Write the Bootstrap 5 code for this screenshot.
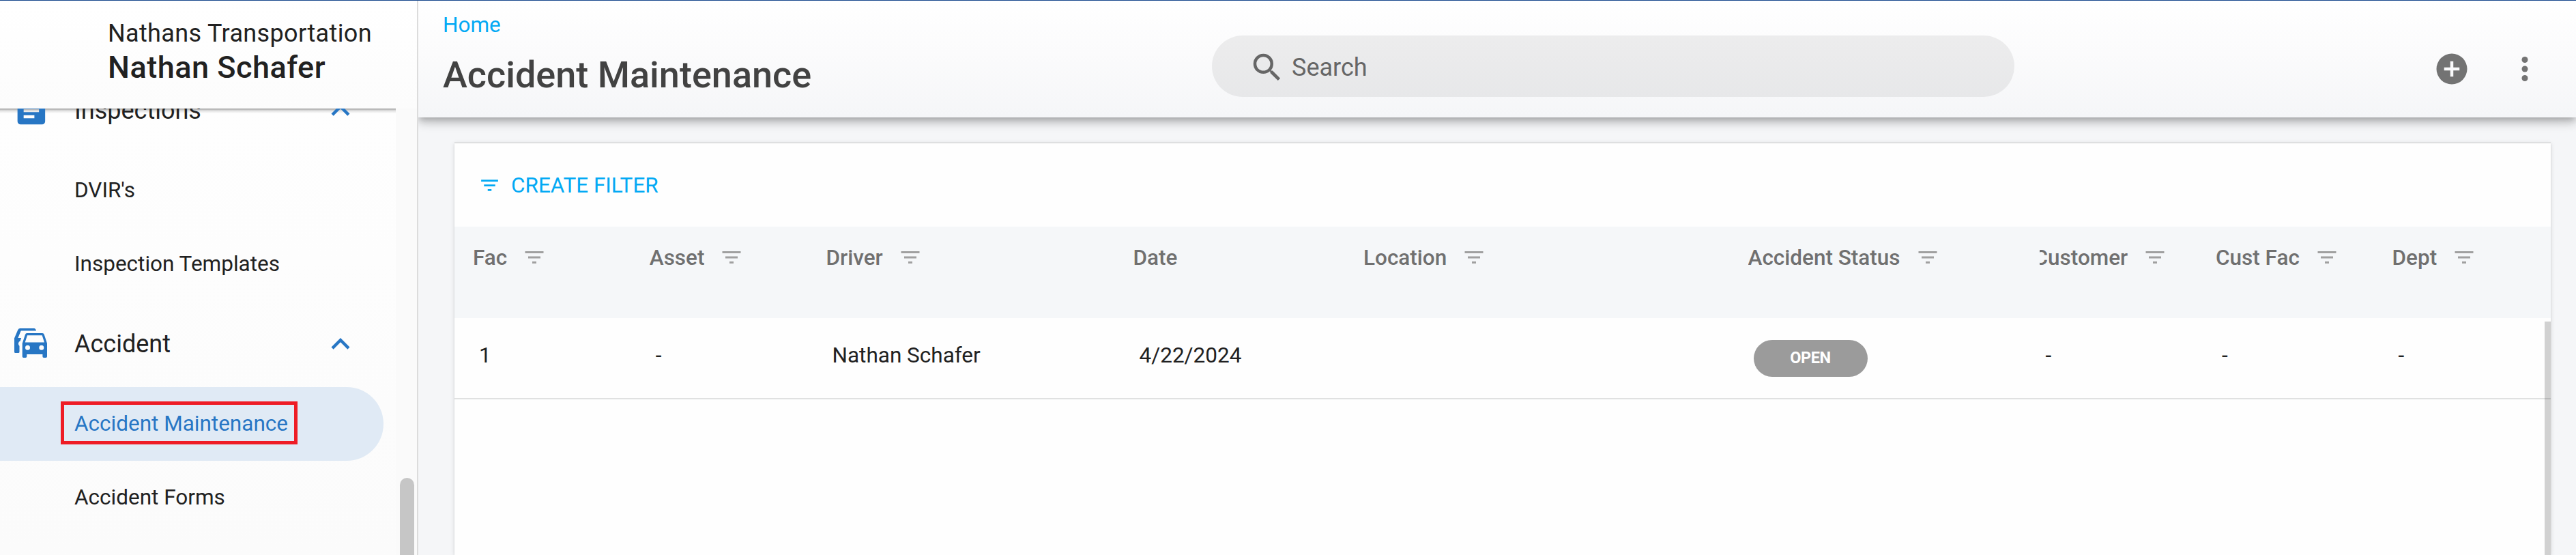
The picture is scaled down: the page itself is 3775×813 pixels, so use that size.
<!DOCTYPE html>
<html lang="en">
<head>
<meta charset="utf-8">
<title>Accident Maintenance</title>
<link href="https://cdn.jsdelivr.net/npm/bootstrap@5.3.0/dist/css/bootstrap.min.css" rel="stylesheet">
<style>
  body { font-family: Roboto, sans-serif; font-size: 31.5px; line-height: 1.2; color: #212121; background: #f5f6f8; }
  .app { height: 813px; border-top: 1px solid #17478c; }
  svg { display: block; flex: none; fill: currentColor; }

  .side { width: 613px; border-right: 2px solid #dcdcdc; background: #fafafa; }
  .side-head { height: 158px; background: linear-gradient(#fff, #fcfcfc); padding: 26px 0 0 158px; }
  .company { font-size: 36px; line-height: 44px; letter-spacing: .36px; }
  .person { font-size: 45px; line-height: 54px; font-weight: 500; letter-spacing: .5px; padding-top: 1px; }
  .side-list { width: 580px; background: linear-gradient(rgba(0,0,0,.4), rgba(0,0,0,.12) 3px, rgba(0,0,0,0) 7px), linear-gradient(#fefefe, #fbfbfb); }
  .side-scroll { margin-top: -60px; }
  .group { height: 126px; font-size: 36px; padding: 0 54px 0 18px; }
  .group .lead-icon { width: 91px; color: #2776c4; }
  .group .label { padding-top: 2px; }
  .group .chev { color: #2776c4; }
  .item { height: 108px; width: 562px; padding-left: 109px; }
  .item.on { background: #e0eaf5; color: #2776c4; border-radius: 0 54px 54px 0; padding-left: 89px; padding-bottom: 3px; }
  .boxed { border: 5px solid #ee1c25; height: 63px; width: 347px; padding: 3px 0 0 15px; }
  .side-thumb { width: 21px; height: 160px; margin: 541px 4px 0 auto; border-radius: 11px 11px 0 0; background: #c6c6c6; }

  .top { height: 171px; background: linear-gradient(#fff, #fbfbfc 45%, #f5f6f8);
    box-shadow: 0 4.5px 9px -2.25px rgba(0,0,0,.2), 0 9px 11.25px rgba(0,0,0,.14), 0 2.25px 22.5px rgba(0,0,0,.12); padding-left: 36px; }
  .titles { width: 1127px; padding-top: 17px; }
  .home { color: #03a9f4; line-height: 38px; }
  h1 { font-size: 54px; line-height: 64px; font-weight: 500; color: #424242; margin: 22px 0 0; }
  .search { width: 1176px; height: 90px; margin-top: 51px; border-radius: 45px; background: rgba(0,0,0,.063); padding: 3px 0 0 54px; font-size: 36px; color: #666; gap: 9px; }
  .search span { padding-top: 2px; }
  .tools { margin-top: 73px; margin-right: 48px; gap: 53px; color: #737373; }

  .panel { margin: 36px 37px 0 53px; background: #fefefe; border-top: 2px solid #dedfe0;
    box-shadow: 0 4.5px 2.25px -2.25px rgba(0,0,0,.2), 0 2.25px 2.25px rgba(0,0,0,.1), 0 2.25px 6.75px rgba(0,0,0,.12); }
  .filterbar { height: 122px; color: #03a9f4; padding-left: 35px; gap: 15px; }
  .filterbar span { padding-top: 2px; }
  .grid-row { display: grid; grid-template-columns: 258.75px 258.75px 450px 337.5px 563.5px 427px 258.5px 258.5px 1fr; padding-left: 27px; }
  .grid-head { height: 134px; background: #f5f7f9; font-weight: 500; color: #707070; padding-top: 26px; }
  .grid-head > div { display: flex; align-items: center; gap: 22px; height: 38px; overflow: hidden; white-space: nowrap; }
  .grid-head span { padding-top: 1px; }
  .grid-head > .clip > span { margin-left: -8px; }
  .grid-head svg { color: #a0a0a0; }
  .grid-body { height: 119px; border-bottom: 2px solid #e0e1e1; padding-top: 36px; }
  .grid-body > div { padding-left: 9px; line-height: 38px; }
  .status { width: 167px; height: 54px; margin: -4px 0 0 -1px; border-radius: 27px; background: #9b9b9b; color: #fff; font-size: 23.5px; letter-spacing: -.4px; font-weight: 700; padding-bottom: 2px; }
  .vbar { position: absolute; right: 0; top: 5px; bottom: 0; width: 9px; background: rgba(0,0,0,.176); }
</style>
</head>
<body>
<svg width="0" height="0" class="position-absolute">
  <symbol id="filter" viewBox="0 0 24 24"><path d="M10 18h4v-2h-4v2zM3 6v2h18V6H3zm3 7h12v-2H6v2z"/></symbol>
  <symbol id="up" viewBox="0 0 24 24"><path d="M12 8l-6 6 1.41 1.41L12 10.83l4.59 4.58L18 14z"/></symbol>
</svg>
<div class="app d-flex overflow-hidden">
  <aside class="side d-flex flex-column flex-shrink-0">
    <header class="side-head flex-shrink-0">
      <div class="company">Nathans Transportation</div>
      <div class="person">Nathan Schafer</div>
    </header>
    <div class="d-flex flex-grow-1 overflow-hidden">
      <nav class="side-list overflow-hidden flex-shrink-0">
        <div class="side-scroll">
          <div class="group d-flex align-items-center">
            <span class="lead-icon"><svg class="ms-0" width="54" height="54" viewBox="-.4 0 24 24"><path d="M19 3H5a2 2 0 0 0-2 2v14a2 2 0 0 0 2 2h14a2 2 0 0 0 2-2V5a2 2 0 0 0-2-2zm-5 14H7v-2h7v2zm3-4H7v-2h10v2zm0-4H7V7h10v2z"/></svg></span>
            <span class="label flex-grow-1">Inspections</span>
            <svg class="chev" width="54" height="54"><use href="#up"/></svg>
          </div>
          <div class="item d-flex align-items-center">DVIR's</div>
          <div class="item d-flex align-items-center">Inspection Templates</div>
          <div class="group d-flex align-items-center">
            <span class="lead-icon"><svg width="54" height="46" viewBox="-3 0 54 46">
              <path d="M8.500 0H29Q31.300 0 32 3.500H9.700L5.400 14H10.200L8.600 18.500A4.300 4.300 0 0 0 7.500 25.800V34.500Q7.500 36 6 36H1.500Q0 36 0 34.500V14.500L5.200 2.300Q6.200 0 8.500 0Z"/>
              <path fill-rule="evenodd" d="M18.500 7H41Q43 7 43.800 9.200L48 22V41.200Q48 43 46.200 43H43.200Q41.400 43 41.400 41.200V38H18.300V41.200Q18.300 43 16.500 43H13.500Q11.700 43 11.700 41.200V22L15.900 9.200Q16.600 7 18.500 7ZM19 10.300L15.700 20.600H44L40.700 10.300ZM19.500 24.800A3.500 3.500 0 1 0 19.500 31.800A3.500 3.500 0 1 0 19.500 24.800ZM39.800 24.800A3.500 3.500 0 1 0 39.800 31.800A3.500 3.500 0 1 0 39.800 24.800Z"/>
            </svg></span>
            <span class="label flex-grow-1">Accident</span>
            <svg class="chev" width="54" height="54"><use href="#up"/></svg>
          </div>
          <div class="item on d-flex align-items-center"><div class="boxed d-flex align-items-center">Accident Maintenance</div></div>
          <div class="item d-flex align-items-center">Accident Forms</div>
        </div>
      </nav>
      <div class="side-thumb"></div>
    </div>
  </aside>
  <main class="d-flex flex-column flex-grow-1 overflow-hidden">
    <header class="top d-flex align-items-start flex-shrink-0">
      <div class="titles">
        <div class="home">Home</div>
        <h1>Accident Maintenance</h1>
      </div>
      <div class="search d-flex align-items-center">
        <svg width="54" height="54" viewBox="0 0 24 24"><path d="M15.500 14h-.79l-.28-.27A6.471 6.471 0 0 0 16 9.500 6.500 6.500 0 1 0 9.500 16c1.610 0 3.090-.59 4.230-1.570l.27.280v.79l5 4.990L20.490 19l-4.990-5zm-6 0C7.010 14 5 11.990 5 9.500S7.010 5 9.500 5 14 7.010 14 9.500 11.990 14 9.500 14z"/></svg>
        <span>Search</span>
      </div>
      <div class="tools d-flex ms-auto">
        <svg width="54" height="54" viewBox="0 0 24 24"><path d="M12 2a10 10 0 1 0 0 20 10 10 0 0 0 0-20zm5 11h-4v4h-2v-4H7v-2h4V7h2v4h4v2z"/></svg>
        <svg width="54" height="54" viewBox="0 0 24 24"><circle cx="12" cy="6" r="2"/><circle cx="12" cy="12" r="2"/><circle cx="12" cy="18" r="2"/></svg>
      </div>
    </header>
    <section class="panel d-flex flex-column flex-grow-1">
      <div class="filterbar d-flex align-items-center">
        <svg width="33" height="33"><use href="#filter"/></svg>
        <span>CREATE FILTER</span>
      </div>
      <div class="grid-row grid-head">
        <div><span>Fac</span><svg width="36" height="36"><use href="#filter"/></svg></div>
        <div><span>Asset</span><svg width="36" height="36"><use href="#filter"/></svg></div>
        <div><span>Driver</span><svg width="36" height="36"><use href="#filter"/></svg></div>
        <div><span>Date</span></div>
        <div><span>Location</span><svg width="36" height="36"><use href="#filter"/></svg></div>
        <div><span>Accident Status</span><svg width="36" height="36"><use href="#filter"/></svg></div>
        <div class="clip"><span>Customer</span><svg width="36" height="36"><use href="#filter"/></svg></div>
        <div><span>Cust Fac</span><svg width="36" height="36"><use href="#filter"/></svg></div>
        <div><span>Dept</span><svg width="36" height="36"><use href="#filter"/></svg></div>
      </div>
      <div class="position-relative flex-grow-1">
        <div class="grid-row grid-body">
          <div>1</div><div>-</div><div>Nathan Schafer</div><div>4/22/2024</div><div></div>
          <div><div class="status d-flex align-items-center justify-content-center">OPEN</div></div>
          <div>-</div><div>-</div><div>-</div>
        </div>
        <div class="vbar"></div>
      </div>
    </section>
  </main>
</div>
<script src="https://cdn.jsdelivr.net/npm/bootstrap@5.3.0/dist/js/bootstrap.bundle.min.js"></script>
</body>
</html>
